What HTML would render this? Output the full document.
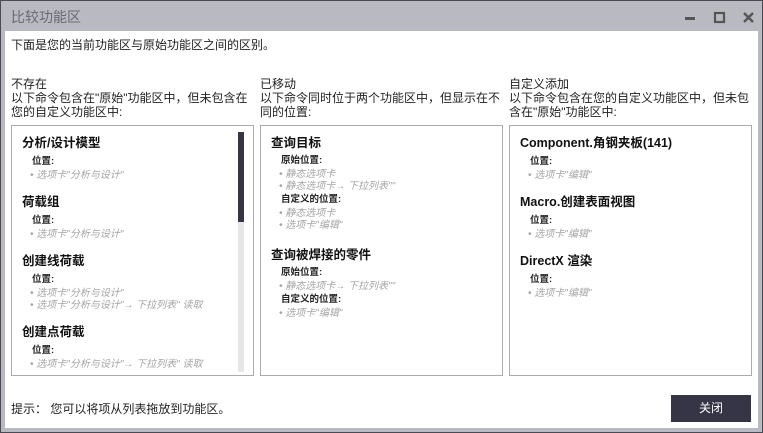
<!DOCTYPE html><html><head><meta charset="utf-8"><style>
*{margin:0;padding:0;box-sizing:border-box}
body{width:763px;height:433px;background:#b9b9c1;font-family:"Liberation Sans","Noto Sans CJK SC",sans-serif;position:relative;overflow:hidden;border:1px solid #4a4a55}
.t{position:absolute;left:10px;top:6px;font-size:14px;color:#6a6a72}
.c{position:absolute;left:4px;top:30px;width:753px;height:397px;background:#fff}
.a{position:absolute;font-size:12px;color:#222;line-height:14px}
.box{position:absolute;top:94px;height:251px;border:1px solid #aaaab0;background:#fff;overflow:hidden}
.box>div{margin-top:-2px}
.it{position:absolute;left:10px;font-size:12.5px;font-weight:bold;color:#111}
.l{position:absolute;left:20px;font-size:9.5px;font-weight:bold;color:#222}
.g{position:absolute;left:18px;font-size:10px;font-style:italic;color:#a5a5a5;white-space:nowrap}
.btn{position:absolute;left:666px;top:364px;width:80px;height:27px;background:#363545;color:#fff;font-size:12px;text-align:center;line-height:27px}
</style></head><body>
<div class="t">比较功能区</div>
<svg style="position:absolute;left:684px;top:10px" width="70" height="14"><rect x="0" y="6" width="10" height="3" fill="#555"/><rect x="30" y="2" width="9" height="9" fill="none" stroke="#555" stroke-width="2.2"/><path d="M59 2 L68 11 M68 2 L59 11" stroke="#555" stroke-width="2.4"/></svg>
<div class="c">
<div class="a" style="left:6px;top:7px">下面是您的当前功能区与原始功能区之间的区别。</div>
<div class="a" style="left:6px;top:46px">不存在<br>以下命令包含在"原始"功能区中，但未包含在<br>您的自定义功能区中:</div>
<div class="a" style="left:255px;top:46px">已移动<br>以下命令同时位于两个功能区中，但显示在不<br>同的位置:</div>
<div class="a" style="left:504px;top:46px">自定义添加<br>以下命令包含在您的自定义功能区中，但未包<br>含在"原始"功能区中:</div>
<div class="box" style="left:6px;width:243px">
<div style="position:absolute;left:226px;top:8px;width:6px;height:240px;background:#e6e6e6"></div>
<div style="position:absolute;left:226px;top:8px;width:6px;height:90px;background:#363545"></div>
<div class="it" style="top:8px">分析/设计模型</div><div class="l" style="top:29px">位置:</div><div class="g" style="top:42px">• 选项卡"分析与设计"</div>
<div class="it" style="top:67px">荷载组</div><div class="l" style="top:88px">位置:</div><div class="g" style="top:101px">• 选项卡"分析与设计"</div>
<div class="it" style="top:126px">创建线荷载</div><div class="l" style="top:147px">位置:</div><div class="g" style="top:160px">• 选项卡"分析与设计"</div><div class="g" style="top:172px">• 选项卡"分析与设计"→ 下拉列表" 读取</div>
<div class="it" style="top:197px">创建点荷载</div><div class="l" style="top:218px">位置:</div><div class="g" style="top:231px">• 选项卡"分析与设计"→ 下拉列表" 读取</div>
</div>
<div class="box" style="left:255px;width:243px">
<div class="it" style="top:8px">查询目标</div><div class="l" style="top:28px">原始位置:</div><div class="g" style="top:41px">• 静态选项卡</div><div class="g" style="top:53px">• 静态选项卡→ 下拉列表""</div>
<div class="l" style="top:67px">自定义的位置:</div><div class="g" style="top:80px">• 静态选项卡</div><div class="g" style="top:92px">• 选项卡"编辑"</div>
<div class="it" style="top:120px">查询被焊接的零件</div><div class="l" style="top:140px">原始位置:</div><div class="g" style="top:153px">• 静态选项卡→ 下拉列表""</div>
<div class="l" style="top:167px">自定义的位置:</div><div class="g" style="top:180px">• 选项卡"编辑"</div>
</div>
<div class="box" style="left:504px;width:243px">
<div class="it" style="top:8px">Component.角钢夹板(141)</div><div class="l" style="top:29px">位置:</div><div class="g" style="top:42px">• 选项卡"编辑"</div>
<div class="it" style="top:67px">Macro.创建表面视图</div><div class="l" style="top:88px">位置:</div><div class="g" style="top:101px">• 选项卡"编辑"</div>
<div class="it" style="top:126px">DirectX 渲染</div><div class="l" style="top:147px">位置:</div><div class="g" style="top:160px">• 选项卡"编辑"</div>
</div>
<div class="a" style="left:6px;top:371px">提示： 您可以将项从列表拖放到功能区。</div>
<div class="btn">关闭</div>
</div>
</body></html>
